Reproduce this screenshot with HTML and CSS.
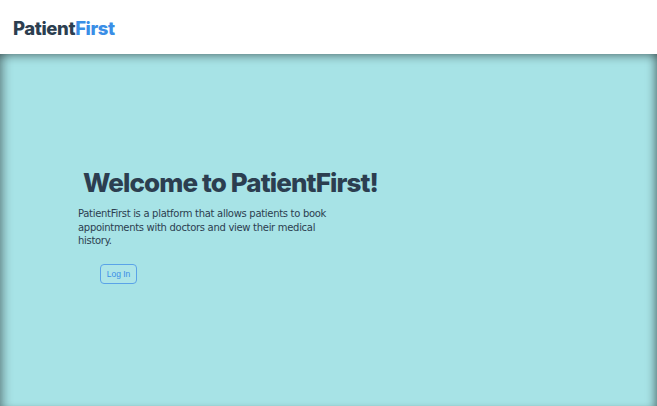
FILE: index.html
```html
<!DOCTYPE html>
<html lang="en">
<head>
<meta charset="utf-8">
<title>PatientFirst</title>
<link rel="stylesheet" href="styles.css">
</head>
<body>
<header class="topbar">
  <div class="logo">Patient<span class="logo-accent">First</span></div>
</header>
<main class="hero">
  <section class="intro">
    <h1 class="intro-title">Welcome to PatientFirst!</h1>
    <p class="intro-text">PatientFirst is a platform that allows patients to book appointments with doctors and view their medical history.</p>
    <button class="login-btn" type="button">Log In</button>
  </section>
</main>
</body>
</html>
```
FILE: styles.css
```css
* { box-sizing: border-box; }
html, body { margin: 0; padding: 0; }
body {
  background: #ffffff;
  font-family: "DejaVu Sans", sans-serif;
  overflow: hidden;
}
.topbar {
  height: 54px;
  display: flex;
  align-items: center;
  padding-left: 13px;
  background: #ffffff;
}
.logo {
  font-family: Inter, "Liberation Sans", sans-serif;
  font-weight: 800;
  font-size: 18.5px;
  color: #2c3e50;
  letter-spacing: -0.4px;
  padding-top: 1px;
}
.logo-accent { color: #3a8ee6; }
.hero {
  height: calc(100vh - 54px);
  background: #a7e3e6;
  box-shadow: inset 0 6px 8px -3px rgba(0, 0, 0, 0.35), inset 10px 0 10px -6px rgba(0, 0, 0, 0.3), inset -8px 0 8px -5px rgba(0, 0, 0, 0.35);
  padding: 113px 0 0 78px;
}
.intro {
  width: 305px;
  display: flex;
  flex-direction: column;
}
.intro-title {
  margin: 0;
  text-align: center;
  font-family: Inter, "Liberation Sans", sans-serif;
  font-weight: 800;
  font-size: 26px;
  letter-spacing: -0.9px;
  line-height: 32px;
  color: #2c3e50;
}
.intro-text {
  margin: 8px 0 0;
  width: 270px;
  font-size: 10px;
  letter-spacing: -0.3px;
  line-height: 13.5px;
  color: #2c3e50;
}
.login-btn {
  align-self: flex-start;
  margin: 16px 0 0 22px;
  height: 20px;
  width: 37px;
  padding: 0;
  font-family: "Liberation Sans", sans-serif;
  font-size: 8.5px;
  color: #3a8ee6;
  background: rgba(255, 255, 255, 0.08);
  border: 1px solid #5aa3e8;
  border-radius: 4px;
}
```
